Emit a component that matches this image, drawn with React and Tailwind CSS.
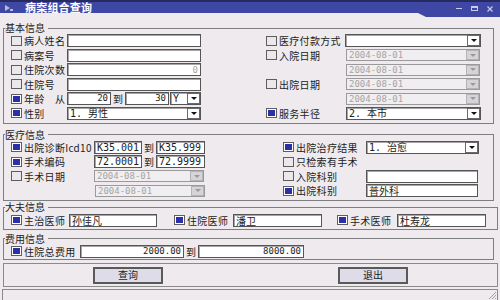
import React from 'react';

const CJK = "font-['Noto_Sans_CJK_SC','Noto_Sans',sans-serif]";
const MONO = "font-['DejaVu_Sans_Mono','Noto_Sans_CJK_SC',monospace]";

// small win-style checkbox
function Check({ on }) {
  return (
    <span className={`w-[11px] h-[10px] shrink-0 border border-[#5e5e5e] p-[1px] flex ${on ? 'bg-white' : 'bg-[#ebe8eb]'}`}>
      {on && <span className="flex-1 bg-[#2c30a8]" />}
    </span>
  );
}

function Label({ w, children }) {
  return <span className={`${w} shrink-0 ml-[2px] text-[10px] leading-[13px] tracking-[0.3px] whitespace-nowrap text-[#1c1c1c] ${CJK}`}>{children}</span>;
}

function Field({ w, value, right, cjk, small }) {
  return (
    <div className={`${w} h-[13px] shrink-0 bg-white border border-[#555] shadow-[inset_1px_1px_0_#a6a6a6] flex items-center px-[2px] overflow-hidden ${right ? 'justify-end' : ''}`}>
      <span className={`leading-[11px] text-[#1c1c1c] whitespace-nowrap ${small ? 'text-[9px]' : 'text-[10px]'} ${cjk ? CJK : MONO}`}>{value}</span>
    </div>
  );
}

function Arrow({ dim }) {
  return (
    <span className={`w-0 h-0 border-l-[3px] border-r-[3px] border-t-[3px] border-l-transparent border-r-transparent ${dim ? 'border-t-[#9a9a9a]' : 'border-t-[#111]'}`} />
  );
}

function Combo({ w, value, disabled }) {
  if (disabled) {
    return (
      <div className={`${w} h-[12px] shrink-0 flex items-center border border-[#9a9a9a] bg-[#f1eef1]`}>
        <span className={`flex-1 pl-[2px] text-[9px] leading-[10px] text-[#a4a4a4] ${MONO}`}>{value}</span>
        <span className="w-[13px] h-[10px] bg-[#d6d4d8] border border-[#b4b4b4] flex items-center justify-center">
          <Arrow dim />
        </span>
      </div>
    );
  }
  return (
    <div className={`${w} h-[13px] shrink-0 flex items-center bg-white border border-[#555] shadow-[inset_1px_1px_0_#a6a6a6]`}>
      <span className={`flex-1 pl-[2px] text-[10px] leading-[11px] text-[#1c1c1c] whitespace-nowrap ${MONO}`}>{value}</span>
      <span className="w-[13px] h-[11px] bg-white border border-[#6a6a6a] flex items-center justify-center">
        <Arrow />
      </span>
    </div>
  );
}

function To() {
  return <span className={`w-[14px] shrink-0 text-center text-[10px] leading-[13px] text-[#1c1c1c] ${CJK}`}>到</span>;
}

function Group({ title, w = 'w-[491px]', mt, pb, gap, children }) {
  return (
    <fieldset className={`${w} ${mt} border border-[#7e7e7e] p-0 shrink-0`}>
      <legend className={`ml-[1px] pr-[3px] p-0 text-[10px] leading-[10px] text-[#1c1c1c] ${CJK}`}>{title}</legend>
      <div className={`flex flex-col pl-[7px] ${gap} ${pb}`}>{children}</div>
    </fieldset>
  );
}

const Row = ({ children }) => <div className="flex items-center h-[13px]">{children}</div>;

export default function App() {
  return (
    <div className="w-[500px] h-[300px] bg-[#eeeaee] flex flex-col overflow-hidden">
      {/* title bar */}
      <div className="h-[17px] shrink-0 flex items-start">
        <div className="flex-1 h-[13px] bg-[#3f47a5] border-t-2 border-[#272a5c] flex items-center">
          <svg width="8" height="6" viewBox="0 0 8 6" className="ml-[5px]">
            <path d="M0 0 L5 3 L0 6 Z" fill="#b8bcd8" />
            <rect x="5" y="4" width="3" height="2" fill="#b8bcd8" />
          </svg>
          <span className={`ml-[12px] text-[11px] leading-[11px] font-bold text-white tracking-[0.2px] ${CJK}`}>病案组合查询</span>
        </div>
        <div className="w-[82px] h-[17px] bg-[#3f47a5] border-t-2 border-[#272a5c] [clip-path:polygon(0_0,100%_0,100%_100%,8px_100%,0_13px)] flex items-start justify-end pt-[3px] pr-[7px] gap-[9px]">
          <span className="w-[6px] h-[1px] mt-[3px] bg-[#c9cce8]" />
          <span className="w-[7px] h-[5px] mt-[1px] border border-[#c9cce8] border-t-2" />
          <svg width="6" height="6" viewBox="0 0 6 6" className="mt-[1px]">
            <path d="M0.5 0.5 L5.5 5.5 M5.5 0.5 L0.5 5.5" stroke="#c9cce8" strokeWidth="1.2" />
          </svg>
        </div>
      </div>

      <div className="flex flex-col px-[3px]">
        {/* 基本信息 */}
        <Group title="基本信息" mt="mt-[6px]" pb="pb-[3px] pt-[1px]" gap="gap-[1.6px]">
          <Row>
            <Check /><Label w="w-[43px]">病人姓名</Label><Field w="w-[134px]" value="" />
            <span className="ml-[65px]" /><Check /><Label w="w-[66px]">医疗付款方式</Label><Combo w="w-[136px]" value="" />
          </Row>
          <Row>
            <Check /><Label w="w-[43px]">病案号</Label><Field w="w-[134px]" value="" />
            <span className="ml-[65px]" /><Check /><Label w="w-[67px]">入院日期</Label><Combo w="w-[134px]" value="2004-08-01" disabled />
          </Row>
          <Row>
            <Check /><Label w="w-[43px]">住院次数</Label>
            <div className="w-[134px] h-[13px] shrink-0 bg-white border border-[#555] shadow-[inset_1px_1px_0_#a6a6a6] flex items-center justify-end px-[2px]">
              <span className={`text-[9px] leading-[10px] text-[#a4a4a4] ${MONO}`}>0</span>
            </div>
            <span className="ml-[65px] w-[80px] shrink-0" /><Combo w="w-[134px]" value="2004-08-01" disabled />
          </Row>
          <Row>
            <Check /><Label w="w-[43px]">住院号</Label><Field w="w-[134px]" value="" />
            <span className="ml-[65px]" /><Check /><Label w="w-[67px]">出院日期</Label><Combo w="w-[134px]" value="2004-08-01" disabled />
          </Row>
          <Row>
            <Check on /><Label w="w-[31px]">年龄</Label>
            <span className={`w-[12px] shrink-0 text-[10px] leading-[13px] text-[#1c1c1c] ${CJK}`}>从</span>
            <Field w="w-[44px]" value="20" right small /><To /><Field w="w-[44px]" value="30" right small />
            <span className="ml-[1px]" /><Combo w="w-[31px]" value="Y" />
            <span className="ml-[65px] w-[80px] shrink-0" /><Combo w="w-[134px]" value="2004-08-01" disabled />
          </Row>
          <Row>
            <Check on /><Label w="w-[43px]">性别</Label><Combo w="w-[134px]" value="1. 男性" />
            <span className="ml-[65px]" /><Check on /><Label w="w-[67px]">服务半径</Label><Combo w="w-[135px]" value="2. 本市" />
          </Row>
        </Group>

        {/* 医疗信息 */}
        <Group title="医疗信息" mt="mt-[6px]" pb="pb-[2.5px] pt-[1px]" gap="gap-[1.5px]">
          <Row>
            <div className="w-[196px] shrink-0 flex items-center">
              <Check on /><Label w="w-[69px]">出院诊断Icd10</Label>
              <span className="ml-[1px]" /><Field w="w-[48px]" value="K35.001" /><To /><Field w="w-[49px]" value="K35.999" />
            </div>
            <span className="ml-[76px]" /><Check on /><Label w="w-[70px]">出院治疗结果</Label><Combo w="w-[113px]" value="1. 治愈" />
          </Row>
          <Row>
            <div className="w-[196px] shrink-0 flex items-center">
              <Check on /><Label w="w-[69px]">手术编码</Label>
              <span className="ml-[1px]" /><Field w="w-[48px]" value="72.0001" /><To /><Field w="w-[49px]" value="72.9999" />
            </div>
            <span className="ml-[76px]" /><Check /><Label w="w-[70px]">只检索有手术</Label>
          </Row>
          <Row>
            <div className="w-[196px] shrink-0 flex items-center">
              <Check /><Label w="w-[69px]">手术日期</Label>
              <span className="ml-[1px]" /><Combo w="w-[110px]" value="2004-08-01" disabled />
            </div>
            <span className="ml-[76px]" /><Check /><Label w="w-[70px]">入院科别</Label><Field w="w-[112px]" value="" />
          </Row>
          <Row>
            <div className="w-[196px] shrink-0 flex items-center">
              <span className="w-[84px] shrink-0" /><Combo w="w-[110px]" value="2004-08-01" disabled />
            </div>
            <span className="ml-[76px]" /><Check on /><Label w="w-[70px]">出院科别</Label><Field w="w-[112px]" value="普外科" cjk />
          </Row>
        </Group>

        {/* 大夫信息 */}
        <Group title="大夫信息" w="w-[495px]" mt="mt-[1.5px]" pb="pb-[2px] pt-[1.5px]" gap="">
          <Row>
            <Check on /><Label w="w-[43px]">主治医师</Label><span className="ml-[2px]" /><Field w="w-[88px]" value="孙佳凡" cjk />
            <span className="ml-[17px]" /><Check on /><Label w="w-[44px]">住院医师</Label><span className="ml-[2px]" /><Field w="w-[89px]" value="潘卫" cjk />
            <span className="ml-[15px]" /><Check on /><Label w="w-[45px]">手术医师</Label><span className="ml-[2px]" /><Field w="w-[89px]" value="杜寿龙" cjk />
          </Row>
        </Group>

        {/* 费用信息 */}
        <Group title="费用信息" mt="mt-[4px]" pb="pb-[1px] pt-[1px]" gap="">
          <Row>
            <Check on /><Label w="w-[54px]">住院总费用</Label><span className="ml-[2px]" />
            <Field w="w-[104px]" value="2000.00" right small /><To /><Field w="w-[106px]" value="8000.00" right small />
          </Row>
        </Group>

        {/* buttons */}
        <div className="w-[495px] h-[24px] mt-[3px] shrink-0 border border-[#8a8a8a] flex items-center pt-[1px]">
          <button className={`ml-[89px] w-[70px] h-[17px] bg-[#dddce8] border-2 border-[#5a5a5a] text-[10px] leading-[12px] text-[#1c1c1c] ${CJK}`}>查询</button>
          <button className={`ml-[175px] w-[70px] h-[17px] bg-[#dddce8] border-2 border-[#5a5a5a] text-[10px] leading-[12px] text-[#1c1c1c] ${CJK}`}>退出</button>
        </div>
      </div>

      {/* status strip */}
      <div className="mt-[2px] mx-[2px] flex-1 border-t border-x border-[#8a8a8a] flex items-end justify-end">
        <svg width="10" height="10" viewBox="0 0 10 10">
          <path d="M9 2 L2 9 M9 5 L5 9 M9 8 L8 9" stroke="#a0a0a0" strokeWidth="1" />
        </svg>
      </div>
    </div>
  );
}
